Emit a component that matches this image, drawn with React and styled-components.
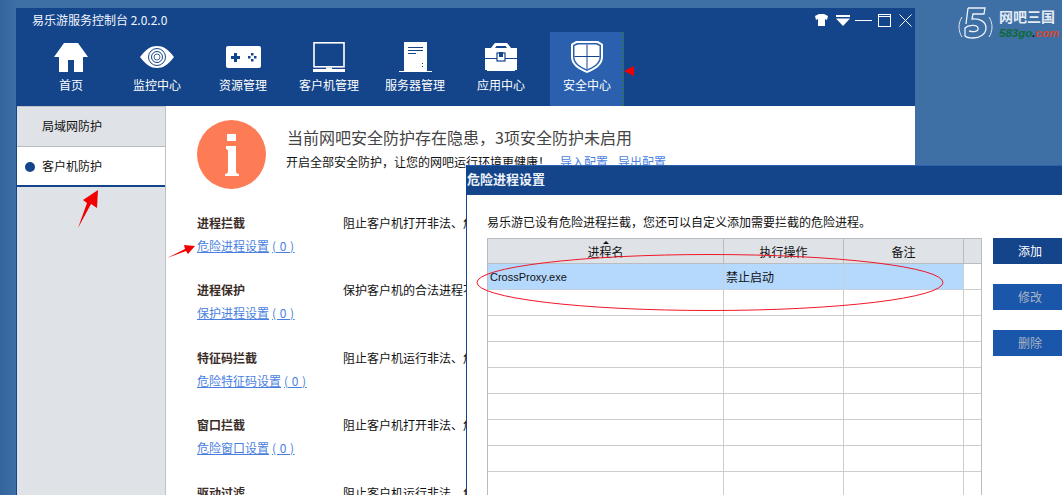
import React from "react"
import styled, { createGlobalStyle } from "styled-components"

const GlobalStyle = createGlobalStyle`
  html, body {
    margin: 0;
    padding: 0;
    background: #3e6fa5;
  }
  * {
    box-sizing: border-box;
  }
`

const CJK = `"Noto Sans CJK SC", "Liberation Sans", sans-serif`

const Page = styled.div`
  position: relative;
  width: 1062px;
  height: 495px;
  overflow: hidden;
  padding: 8px 0 0 16px;
  font-family: ${CJK};
  font-size: 12px;
  color: #111;
  background: linear-gradient(90deg, #34659c 0, #3e6fa5 16px, #3e6fa5 100%);
`

const Window = styled.div`
  width: 899px;
  height: 487px;
  display: flex;
  flex-direction: column;
  background: #fff;
  border-left: 1px solid #14458a;
`

const Header = styled.header`
  height: 98px;
  flex: none;
  background: #14458a;
  display: flex;
  flex-direction: column;
`

const TitleRow = styled.div`
  height: 24px;
  display: flex;
  align-items: center;
  justify-content: space-between;
  padding: 0 3px 0 15px;
  color: #f2f5fa;
  font-size: 12px;
  line-height: 24px;
`

const WindowControls = styled.div`
  display: flex;
  align-items: center;
`

const Control = styled.span`
  display: flex;
  margin-left: ${(p) => p.$gap || 0}px;
`

const Nav = styled.nav`
  display: flex;
  gap: 12px;
  padding-left: 17px;
`

const NavItem = styled.div`
  position: relative;
  width: 74px;
  height: 74px;
  display: flex;
  flex-direction: column;
  align-items: center;
  color: #fff;
  font-size: 12px;
  white-space: nowrap;
  background: ${(p) => (p.$active ? "#2a60ae" : "transparent")};

  ${(p) =>
    p.$active &&
    `&::after {
      content: "";
      position: absolute;
      top: 0;
      right: 0;
      bottom: 0;
      border-right: 2px dotted #2f6b55;
    }`}
`

const NavIcon = styled.div`
  width: 44px;
  height: 40px;
  margin-top: 5px;
  display: flex;
  align-items: center;
  justify-content: center;
`

const NavLabel = styled.span`
  line-height: 18px;
  margin-top: -1px;
`

const Body = styled.div`
  flex: 1;
  display: flex;
  min-height: 0;
`

const Sidebar = styled.aside`
  width: 149px;
  flex: none;
  background: #dfe2e7;
  border: 1px solid #bfc2c7;
  border-left: none;
  border-bottom: none;
`

const SideItem = styled.div`
  height: 40px;
  display: flex;
  align-items: center;
  padding: 0 0 2px 25px;
  border-bottom: 1px solid #b9bcc1;
  font-size: 12px;
`

const SideItemActive = styled.div`
  position: relative;
  height: 40px;
  display: flex;
  align-items: center;
  padding: 0 0 2px 25px;
  background: #fff;
  border-bottom: 2px solid #14458a;
  font-size: 12px;

  &::before {
    content: "";
    position: absolute;
    left: 8px;
    top: 15px;
    width: 10px;
    height: 10px;
    border-radius: 50%;
    background: #14458a;
  }
`

const Content = styled.main`
  flex: 1;
  min-width: 0;
  overflow: hidden;
  padding: 14px 0 0 31px;
`

const Notice = styled.div`
  display: flex;
  gap: 21px;
`

const NoticeText = styled.div`
  padding-top: 5px;
`

const NoticeTitle = styled.div`
  font-size: 16px;
  line-height: 24px;
  color: #444;
  white-space: nowrap;
`

const NoticeSub = styled.div`
  display: flex;
  line-height: 18px;
  margin: 4px 0 0 -1px;
  white-space: nowrap;
  color: #111;
`

const ConfigLink = styled.a`
  color: #4a7fe0;
  text-decoration: underline;
  margin-left: ${(p) => p.$gap}px;
`

const Sections = styled.div`
  margin-top: 23px;
  display: grid;
  grid-auto-rows: 67.5px;
`

const Section = styled.section`
  display: grid;
  grid-template-columns: 146px 1fr;
  grid-template-rows: 20px 26px;
  align-items: center;
  white-space: nowrap;
`

const SectionTitle = styled.div`
  font-weight: 700;
  color: #3a2c26;
`

const SectionDesc = styled.div`
  color: #111;
`

const SectionLink = styled.a`
  grid-column: 1;
  justify-self: start;
  color: #4a7fe0;
  text-decoration: underline;
`

const LinkCount = styled.span`
  padding: 0 3px;
  letter-spacing: 0.5px;
`

const Dialog = styled.div`
  position: absolute;
  left: 466px;
  top: 165px;
  width: 600px;
  height: 340px;
  background: #fff;
  border-left: 1px solid #14458a;
`

const DialogTitle = styled.div`
  height: 30px;
  background: #14458a;
  border-top: 1px solid #2a60ae;
  color: #eef2f8;
  font-size: 13px;
  font-weight: 700;
  line-height: 25px;
`

const DialogBody = styled.div`
  padding: 18px 0 0 20px;
`

const Intro = styled.div`
  line-height: 18px;
  margin-bottom: 7px;
`

const DialogRow = styled.div`
  display: flex;
  gap: 11px;
  align-items: flex-start;
`

const Table = styled.div`
  width: 495px;
  flex: none;
  border: 1px solid #b9bcc1;
  border-bottom: none;
  display: grid;
  grid-template-columns: 236px 120px 120px 1fr;
  grid-template-rows: 25px;
  grid-auto-rows: 26px;
`

const HeadCell = styled.div`
  position: relative;
  background: #dfe2e7;
  border-right: 1px solid #b9bcc1;
  border-bottom: 1px solid #b9bcc1;
  display: flex;
  align-items: center;
  justify-content: center;

  &:nth-child(4) {
    border-right: none;
  }
`

const SortMark = styled.span`
  position: absolute;
  top: 2px;
  left: 50%;
  margin-left: -3px;
  border-left: 3px solid transparent;
  border-right: 3px solid transparent;
  border-bottom: 3px solid #111;
`

const Cell = styled.div`
  display: flex;
  align-items: center;
  padding-left: 2px;
  border-right: 1px solid #cfcdc8;
  border-bottom: 1px solid #cfcdc8;
  background: ${(p) => (p.$selected ? "#b5d8fd" : "#fff")};
  border-color: ${(p) => (p.$selected ? "#c3d2dc" : "#cfcdc8")};

  &:nth-child(4n) {
    border-right: none;
  }
`

const FileName = styled.span`
  font-family: "Liberation Sans", sans-serif;
  font-size: 11px;
`

const Buttons = styled.div`
  display: flex;
  flex-direction: column;
  gap: 20px;
`

const Button = styled.button`
  width: 80px;
  height: 26px;
  border: none;
  padding: 0 6px 2px 0;
  font-family: ${CJK};
  font-size: 12px;
  text-align: center;
  background: ${(p) => (p.$muted ? "#1a56a9" : "#14458a")};
  color: ${(p) => (p.$muted ? "#a9b4c6" : "#fff")};
`

const Brand = styled.div`
  position: absolute;
  left: 957px;
  top: 7px;
  display: flex;
  gap: 5px;
`

const BrandText = styled.div`
  display: flex;
  flex-direction: column;
`

const BrandName = styled.div`
  font-size: 14px;
  line-height: 18px;
  font-weight: 700;
  color: #e4ebf4;
  white-space: nowrap;
`

const BrandSite = styled.div`
  font-family: "Liberation Sans", sans-serif;
  font-size: 11.5px;
  line-height: 15px;
  margin-top: 1px;
  font-weight: 700;
  font-style: italic;
  color: #0f6a36;
  white-space: nowrap;

  b {
    color: #111;
  }

  span {
    color: #d8492a;
  }
`

const Annotations = styled.svg`
  position: absolute;
  left: 0;
  top: 0;
  pointer-events: none;
`

const HomeIcon = () => (
  <svg width="34" height="29" viewBox="0 0 34 29">
    <path fill="#fff" d="M10 0h14l10 14h-5v15H20V17h-6v12H5V14H0z" />
  </svg>
)

const EyeIcon = () => (
  <svg width="34" height="22" viewBox="0 0 34 22">
    <path fill="#fff" d="M0 11C6 3 11 0 17 0s11 3 17 11c-6 8-11 11-17 11S6 19 0 11z" />
    <circle cx="17" cy="11" r="8.500" fill="none" stroke="#14458a" strokeWidth="1" />
    <circle cx="17" cy="11" r="5.500" fill="none" stroke="#14458a" strokeWidth="1" />
    <circle cx="17" cy="11" r="3" fill="none" stroke="#14458a" strokeWidth="0.800" />
  </svg>
)

const PadIcon = () => (
  <svg width="35" height="22" viewBox="0 0 35 22">
    <rect width="35" height="22" rx="2" fill="#fff" />
    <path fill="#14458a" d="M5 10h3V7h3v3h3v3h-3v3H8v-3H5z" />
    <rect x="25" y="7" width="2.500" height="2.500" fill="#14458a" />
    <rect x="25" y="13" width="2.500" height="2.500" fill="#14458a" />
    <rect x="22" y="10" width="2.500" height="2.500" fill="#14458a" />
    <rect x="28" y="10" width="2.500" height="2.500" fill="#14458a" />
  </svg>
)

const MonitorIcon = () => (
  <svg width="32" height="30" viewBox="0 0 32 30">
    <rect x="1" y="0.800" width="30" height="24" fill="none" stroke="#fff" strokeWidth="1.600" />
    <path fill="#fff" d="M0 27h13v-1.500h6V27h13v3H0z" />
  </svg>
)

const ServerIcon = () => (
  <svg width="33" height="30" viewBox="0 0 33 30">
    <rect x="5" y="0" width="23" height="29" fill="#fff" />
    <rect y="29" width="33" height="1" fill="#fff" />
    <path stroke="#14458a" strokeWidth="1" d="M9 5.500h15M9 8.500h15M9 11.500h8" />
    <rect x="23" y="21" width="1" height="1" fill="#14458a" />
    <rect x="23" y="24" width="1" height="1" fill="#14458a" />
  </svg>
)

const ToolboxIcon = () => (
  <svg width="32" height="28" viewBox="0 0 32 28">
    <path fill="#fff" fillRule="evenodd" d="M6 5l3-4 1-1h12l1 1 3 4h6v10H0V5zM10 5h12l-1.500-2h-9z" />
    <path fill="#fff" d="M0 16h32v11h-2v1H2v-1H0z" />
    <rect x="12" y="10" width="8" height="8" fill="#fff" stroke="#14458a" strokeWidth="1.200" />
    <rect x="14" y="9" width="4" height="5" fill="#14458a" />
  </svg>
)

const ShieldIcon = () => (
  <svg width="32" height="32" viewBox="0 0 32 32">
    <path fill="#fff" d="M5 0h22l5 3v13c0 8-8 13-16 16C8 29 0 24 0 16V3z" />
    <path fill="#2a60ae" d="M6 2h20l4 2v12c0 7-7 11-14 14C9 27 2 23 2 16V4z" />
    <path fill="#fff" d="M7 3.500h18l3.500 1.500v11c0 6-6 9.500-12.500 12.500C9.500 25.500 3.500 22 3.500 16V5z" />
    <path stroke="#14458a" strokeWidth="1" fill="none" d="M16 3.500v25M3.500 15.500h25" />
  </svg>
)

const ShirtIcon = () => (
  <svg width="13" height="12" viewBox="0 0 13 12">
    <path fill="#fff" d="M4 0h5l4 2-1 4-2-1v7H3V5L1 6 0 2z" />
  </svg>
)

const MenuIcon = () => (
  <svg width="14" height="11" viewBox="0 0 14 11">
    <rect width="14" height="2" fill="#fff" />
    <path fill="#fff" d="M0 3.500h14L7 11z" />
  </svg>
)

const MinIcon = () => (
  <svg width="17" height="12" viewBox="0 0 17 12">
    <rect y="6" width="17" height="1" fill="#fff" />
  </svg>
)

const MaxIcon = () => (
  <svg width="13" height="13" viewBox="0 0 13 13">
    <rect x="0.500" y="0.500" width="12" height="12" fill="none" stroke="#fff" />
    <rect y="2" width="13" height="1" fill="#fff" />
  </svg>
)

const CloseIcon = () => (
  <svg width="13" height="13" viewBox="0 0 13 13">
    <path stroke="#fff" fill="none" d="M0.500 0.500l12 12M12.500 0.500l-12 12" />
  </svg>
)

const InfoIcon = () => (
  <svg width="69" height="69" viewBox="0 0 69 69" style={{ flex: "none" }}>
    <circle cx="34.500" cy="34.500" r="34.500" fill="#fd7c55" />
    <rect x="30" y="14" width="9" height="7" fill="#fff" />
    <path fill="#fff" d="M29 26h10v25c0 2 1 3 3 3v2H28v-2c2 0 3-1 3-3V31c0-1-1-2-2-2z" />
  </svg>
)

const BrandMark = () => (
  <svg width="37" height="32" viewBox="0 0 37 32">
    <path fill="none" stroke="#dfe7f1" strokeWidth="1" d="M5 10C1 16 1 24 5 30M32 10c4 6 4 14 0 20" />
    <path
      fill="none"
      stroke="#eef3f9"
      strokeWidth="1.300"
      d="M11 1H28L27 7H16L15 12C23 11 29 15 29 21C29 27 23 31 16 31C12 31 9 30 8 29V21C11 18 20 17 21 21C22 25 16 25 12 24M11 1L9 17"
    />
  </svg>
)

const navItems = [
  { label: "首页", icon: <HomeIcon /> },
  { label: "监控中心", icon: <EyeIcon /> },
  { label: "资源管理", icon: <PadIcon /> },
  { label: "客户机管理", icon: <MonitorIcon /> },
  { label: "服务器管理", icon: <ServerIcon /> },
  { label: "应用中心", icon: <ToolboxIcon /> },
  { label: "安全中心", icon: <ShieldIcon />, active: true },
]

const sections = [
  { title: "进程拦截", desc: "阻止客户机打开非法、危险的进程，保障网吧的运行环境", link: "危险进程设置" },
  { title: "进程保护", desc: "保护客户机的合法进程不被恶意结束，保障网吧的运行环境", link: "保护进程设置" },
  { title: "特征码拦截", desc: "阻止客户机运行非法、危险的程序，保障网吧的运行环境", link: "危险特征码设置" },
  { title: "窗口拦截", desc: "阻止客户机打开非法、危险的窗口，保障网吧的运行环境", link: "危险窗口设置" },
  { title: "驱动过滤", desc: "阻止客户机运行非法、危险的驱动，保障网吧的运行环境" },
]

const emptyRows = Array.from({ length: 8 })

export default function App() {
  return (
    <Page>
      <GlobalStyle />
      <Window>
        <Header>
          <TitleRow>
            <span>易乐游服务控制台 2.0.2.0</span>
            <WindowControls>
              <Control><ShirtIcon /></Control>
              <Control $gap={8}><MenuIcon /></Control>
              <Control $gap={5}><MinIcon /></Control>
              <Control $gap={6}><MaxIcon /></Control>
              <Control $gap={8}><CloseIcon /></Control>
            </WindowControls>
          </TitleRow>
          <Nav>
            {navItems.map((item) => (
              <NavItem key={item.label} $active={item.active}>
                <NavIcon>{item.icon}</NavIcon>
                <NavLabel>{item.label}</NavLabel>
              </NavItem>
            ))}
          </Nav>
        </Header>
        <Body>
          <Sidebar>
            <SideItem>局域网防护</SideItem>
            <SideItemActive>客户机防护</SideItemActive>
          </Sidebar>
          <Content>
            <Notice>
              <InfoIcon />
              <NoticeText>
                <NoticeTitle>当前网吧安全防护存在隐患，3项安全防护未启用</NoticeTitle>
                <NoticeSub>
                  开启全部安全防护，让您的网吧运行环境更健康！
                  <ConfigLink $gap={10}>导入配置</ConfigLink>
                  <ConfigLink $gap={10}>导出配置</ConfigLink>
                </NoticeSub>
              </NoticeText>
            </Notice>
            <Sections>
              {sections.map((s) => (
                <Section key={s.title}>
                  <SectionTitle>{s.title}</SectionTitle>
                  <SectionDesc>{s.desc}</SectionDesc>
                  {s.link && (
                    <SectionLink>
                      {s.link}
                      <LinkCount>( 0 )</LinkCount>
                    </SectionLink>
                  )}
                </Section>
              ))}
            </Sections>
          </Content>
        </Body>
      </Window>

      <Brand>
        <BrandMark />
        <BrandText>
          <BrandName>网吧三国</BrandName>
          <BrandSite>
            583go<b>.</b>
            <span>com</span>
          </BrandSite>
        </BrandText>
      </Brand>

      <Dialog>
        <DialogTitle>危险进程设置</DialogTitle>
        <DialogBody>
          <Intro>易乐游已设有危险进程拦截，您还可以自定义添加需要拦截的危险进程。</Intro>
          <DialogRow>
            <Table>
              <HeadCell>
                <SortMark />
                进程名
              </HeadCell>
              <HeadCell>执行操作</HeadCell>
              <HeadCell>备注</HeadCell>
              <HeadCell />
              <Cell $selected>
                <FileName>CrossProxy.exe</FileName>
              </Cell>
              <Cell $selected>禁止启动</Cell>
              <Cell $selected />
              <Cell />
              {emptyRows.map((_, i) => (
                <React.Fragment key={i}>
                  <Cell />
                  <Cell />
                  <Cell />
                  <Cell />
                </React.Fragment>
              ))}
            </Table>
            <Buttons>
              <Button>添加</Button>
              <Button $muted>修改</Button>
              <Button $muted>删除</Button>
            </Buttons>
          </DialogRow>
        </DialogBody>
      </Dialog>

      <Annotations width="1062" height="495" viewBox="0 0 1062 495">
        <ellipse cx="710" cy="282.500" rx="233" ry="28" fill="none" stroke="#f01828" strokeWidth="1" />
        <path fill="#f00000" d="M624 71l10-5v10z" />
        <path fill="#f00000" d="M98 190L97 208L91 204L78 228L87 203L83 200z" />
        <path fill="#f00000" d="M195 246L188 254L186 251L167 258L185 249L184 245z" />
      </Annotations>
    </Page>
  )
}
